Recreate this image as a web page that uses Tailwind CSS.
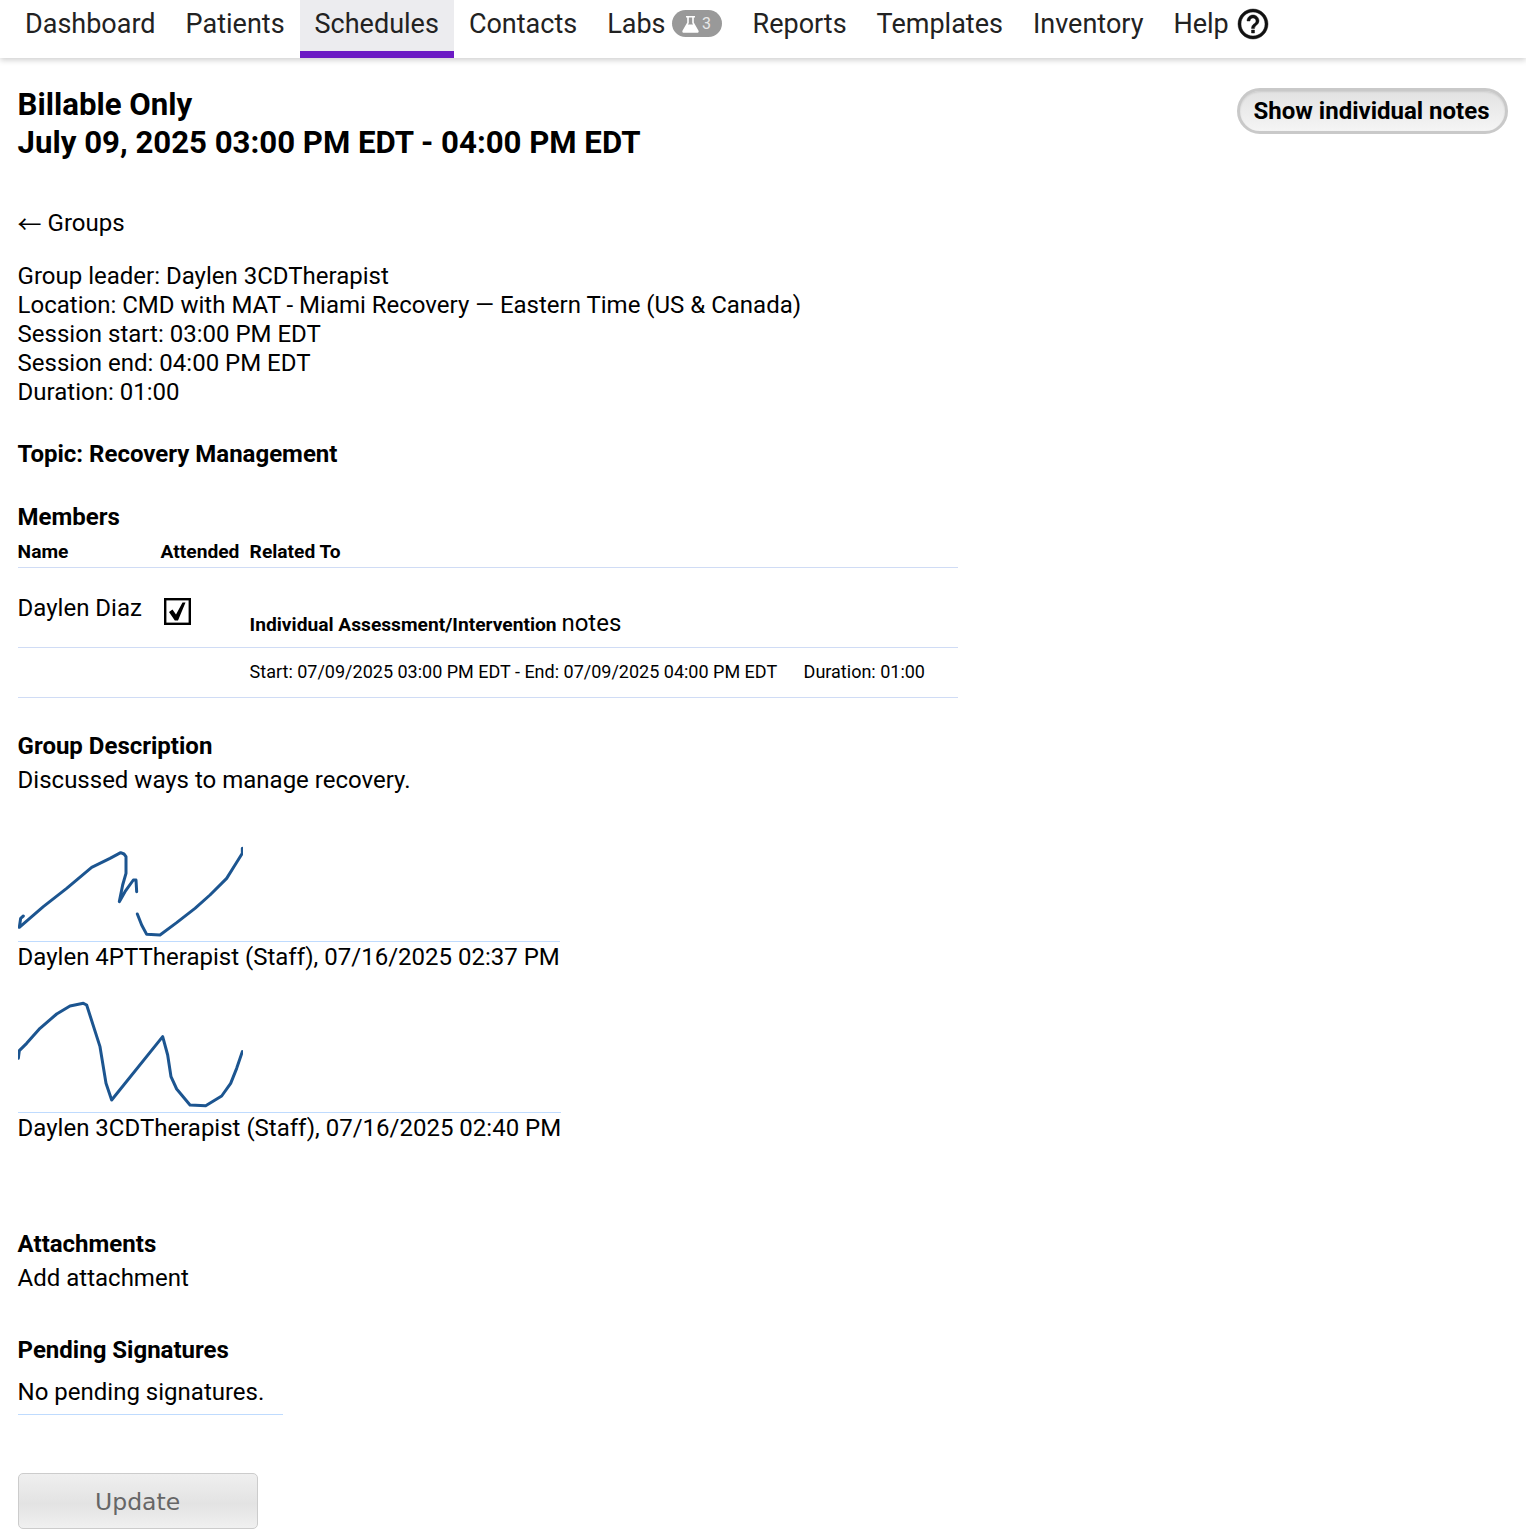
<!DOCTYPE html>
<html lang="en">
<head>
<meta charset="utf-8">
<title>Billable Only</title>
<script src="https://cdn.jsdelivr.net/npm/@tailwindcss/browser@4"></script>
</head>
<body class="bg-white text-black font-['Roboto',sans-serif] text-[24px] leading-[29px] h-[1538px] overflow-hidden">
<nav class="h-[58px] flex pl-[10px] text-[27px] text-[#222] shadow-[0_2px_6px_rgba(0,0,0,0.2)] leading-[48px]">
  <a class="px-[15px]">Dashboard</a>
  <a class="px-[15px]">Patients</a>
  <a class="px-[15px] bg-[#ececef] border-b-[7px] border-[#6c1bc4]">Schedules</a>
  <a class="px-[15px]">Contacts</a>
  <a class="pl-[15px] pr-[16px] flex items-start">Labs
    <span class="ml-[6px] mt-[10px] w-[50px] h-[27px] rounded-full bg-[#999] flex items-center justify-center gap-[3px] text-[16px] leading-none text-[#e8e8e8]">
      <svg width="17" height="18" viewBox="0 0 17 18" fill="#fff"><path fill-rule="evenodd" d="M4 1h9v1.600h-1.200v5L16.400 15.600c.7 1.200 0 2.200-1.200 2.200H1.800c-1.200 0-1.900-1-1.200-2.200L5.200 7.600v-5H4zM6.800 2.600v5.400l-.9 1.600h5.200l-.9-1.600V2.600z"/></svg>
      <span>3</span>
    </span>
  </a>
  <a class="px-[15px]">Reports</a>
  <a class="px-[15px]">Templates</a>
  <a class="px-[15px]">Inventory</a>
  <a class="pl-[15px] flex items-start">Help
    <svg class="ml-[6px] mt-[6px]" width="36" height="36" viewBox="0 0 24 24" fill="#111" stroke="#111" stroke-width="0.3"><path d="M11 18h2v-2h-2v2zm1-16C6.480 2 2 6.480 2 12s4.480 10 10 10 10-4.480 10-10S17.520 2 12 2zm0 18c-4.410 0-8-3.590-8-8s3.590-8 8-8 8 3.590 8 8-3.590 8-8 8zm0-14c-2.210 0-4 1.790-4 4h2c0-1.100.9-2 2-2s2 .9 2 2c0 2-3 1.750-3 5h2c0-2.250 3-2.500 3-5 0-2.210-1.790-4-4-4z"/></svg>
  </a>
</nav>

<main class="pl-[17.6px] pr-[18px] pt-[27px]">
  <div class="flex justify-between items-start">
    <h1 class="mt-px font-bold text-[31.2px] leading-[38px]">Billable Only<br>July 09, 2025 03:00 PM EDT - 04:00 PM EDT</h1>
    <button class="mt-[3px] h-[46px] w-[271px] rounded-full border-[3px] border-[#c9c9c9] bg-gradient-to-b from-[#e2e2e2] to-[#f5f5f5] shadow-[inset_0_1px_2px_rgba(0,0,0,0.1)] font-bold text-[24px] leading-none pr-[2px]">Show individual notes</button>
  </div>

  <p class="mt-[47px]"><span class="relative top-[2px] font-['Noto_Sans_CJK_SC',sans-serif] leading-[0]">←</span> Groups</p>

  <div class="mt-[24px]">
    <p>Group leader: Daylen 3CDTherapist</p>
    <p>Location: CMD with MAT - Miami Recovery — Eastern Time (US &amp; Canada)</p>
    <p>Session start: 03:00 PM EDT</p>
    <p>Session end: 04:00 PM EDT</p>
    <p>Duration: 01:00</p>
  </div>

  <h2 class="mt-[33px] font-bold">Topic: Recovery Management</h2>
  <h2 class="mt-[34px] font-bold">Members</h2>

  <div class="w-[940px]">
    <div class="h-[36px] border-b border-[#d0dcf5] grid grid-cols-[143px_89px_1fr] text-[19.2px] font-bold leading-[39px]">
      <span>Name</span><span>Attended</span><span>Related To</span>
    </div>
    <div class="h-[80px] border-b border-[#d0dcf5] grid grid-cols-[143px_89px_1fr]">
      <span class="pt-[26px]">Daylen Diaz</span>
      <span class="pt-[30px] pl-[3px]">
        <svg width="27" height="27" viewBox="0 0 27 27"><rect x="1.2" y="1.2" width="24.6" height="24.6" fill="none" stroke="#000" stroke-width="2.4"/><path d="M5 14 8.500 11.500 12 16.500 18.500 4.500 21.500 4.500 14 22.500 10.800 22.500Z" fill="#000"/></svg>
      </span>
      <span class="pt-[41px] font-bold text-[19.2px]">Individual Assessment/Intervention <span class="font-normal text-[24px]">notes</span></span>
    </div>
    <div class="h-[50px] border-b border-[#d0dcf5] pl-[232px] flex text-[18px] leading-[48px]">
      <span class="w-[554px]">Start: 07/09/2025 03:00 PM EDT - End: 07/09/2025 04:00 PM EDT</span>
      <span>Duration: 01:00</span>
    </div>
  </div>

  <h2 class="mt-[34px] font-bold">Group Description</h2>
  <p class="mt-[5px]">Discussed ways to manage recovery.</p>

  <div class="mt-[34px] w-fit">
    <div class="h-[113px] border-b border-[#bfdbfe]">
      <svg width="225" height="112" viewBox="54 -33 675 336" fill="none" stroke="#1c5590" stroke-width="9" stroke-linejoin="round" stroke-linecap="round">
        <path d="M70 228 62 235 58 262 130 200 200 145 275 82 330 55 362 38 372 42 378 50 378 100 368 135 358 185 375 155 400 120 408 120 410 155"/>
        <path d="M412 222 425 255 440 283 480 285 530 248 585 205 630 165 680 115 705 75 727 40 727 25"/>
      </svg>
    </div>
    <p class="mt-px">Daylen 4PTTherapist (Staff), 07/16/2025 02:37 PM</p>
  </div>

  <div class="mt-[28px] w-fit">
    <div class="h-[113px] border-b border-[#bfdbfe]">
      <svg width="225" height="112" viewBox="54 30 675 336" fill="none" stroke="#1c5590" stroke-width="9" stroke-linejoin="round" stroke-linecap="round">
        <path d="M55 205 58 182 80 160 120 115 170 72 210 48 250 40 260 45 300 170 318 280 335 330 488 140 503 195 513 260 530 297 570 345 617 347 665 318 692 280 710 235 727 185"/>
      </svg>
    </div>
    <p class="mt-px">Daylen 3CDTherapist (Staff), 07/16/2025 02:40 PM</p>
  </div>

  <h2 class="mt-[87px] font-bold">Attachments</h2>
  <p class="mt-[5px]">Add attachment</p>

  <h2 class="mt-[43px] font-bold">Pending Signatures</h2>
  <p class="mt-[13px] pb-[7px] w-[265px] border-b border-[#bfdbfe]">No pending signatures.</p>

  <button class="mt-[58px] block w-[240px] h-[56px] pt-[2px] rounded-[5px] border border-[#ccc] bg-gradient-to-b from-[#efefef] via-[#e3e3e3] via-55% to-[#f0f0f0] text-[#666] font-['DejaVu_Sans',sans-serif] text-[23.5px]">Update</button>
</main>
</body>
</html>
